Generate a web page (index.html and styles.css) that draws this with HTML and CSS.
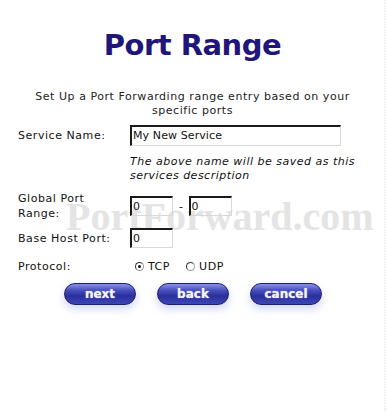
FILE: index.html
```html
<!DOCTYPE html>
<html>
<head>
<meta charset="utf-8">
<link rel="stylesheet" href="styles.css">
</head>
<body>
<div class="page">
  <h1 class="title">Port Range</h1>
  <p class="intro">Set Up a Port Forwarding range entry based on your<br>specific ports</p>
  <div class="form">
    <div class="row row-name">
      <div class="label">Service Name:</div>
      <div class="field"><span class="input input-wide">My New Service</span></div>
    </div>
    <div class="row row-note">
      <div class="label"></div>
      <div class="field note">The above name will be saved as this<br>services description</div>
    </div>
    <div class="row row-range">
      <div class="label label-two">Global Port<br>Range:</div>
      <div class="field range">
        <span class="input input-port">0</span>
        <span class="dash">-</span>
        <span class="input input-port">0</span>
      </div>
    </div>
    <div class="row row-host">
      <div class="label">Base Host Port:</div>
      <div class="field"><span class="input input-port">0</span></div>
    </div>
    <div class="row row-proto">
      <div class="label">Protocol:</div>
      <div class="field proto">
        <span class="radio checked"></span><span class="opt">TCP</span>
        <span class="radio"></span><span class="opt">UDP</span>
      </div>
    </div>
  </div>
  <div class="buttons">
    <span class="btn">next</span>
    <span class="btn">back</span>
    <span class="btn">cancel</span>
  </div>
  <div class="watermark" aria-hidden="true">PortForward.com</div>
</div>
</body>
</html>
```
FILE: styles.css
```css
html, body {
  margin: 0;
  padding: 0;
  background: #ffffff;
}
.page {
  position: relative;
  width: 386px;
  height: 411px;
  box-sizing: border-box;
  border-right: 1px dotted #e4e4e4;
  font-family: "DejaVu Sans", Verdana, sans-serif;
  font-size: 11px;
  letter-spacing: 0.55px;
  color: #111;
  overflow: hidden;
}
.title {
  margin: 0;
  padding-top: 28px;
  text-align: center;
  font-family: "DejaVu Sans", Verdana, sans-serif;
  font-weight: bold;
  font-size: 29px;
  line-height: 34px;
  color: #21157a;
  letter-spacing: -0.5px;
}
.intro {
  margin: 28px 0 0 0;
  text-align: center;
  line-height: 14px;
  font-size: 11px;
  color: #222;
}
.form {
  margin-top: 6px;
  padding-left: 18px;
  position: relative;
  z-index: 2;
}
.row {
  display: flex;
  align-items: center;
}
.label {
  width: 112px;
  flex: none;
  line-height: 15px;
}
.field {
  display: flex;
  align-items: center;
}
.input {
  display: inline-block;
  box-sizing: border-box;
  height: 21px;
  line-height: 18px;
  padding-left: 1px;
  border-top: 2px solid #1a1a1a;
  border-left: 2px solid #1a1a1a;
  border-right: 1px solid #d8d8d8;
  border-bottom: 1px solid #d8d8d8;
  background: transparent;
  color: #111;
  font-size: 11px;
  letter-spacing: 0;
}
.input-wide {
  width: 211px;
  letter-spacing: 0.1px;
}
.input-port {
  width: 43px;
  height: 20px;
}
.row-name {
  height: 22px;
}
.row-note {
  margin-top: 9px;
}
.note {
  display: block;
  font-style: italic;
  line-height: 14px;
  color: #111;
  letter-spacing: 0.5px;
}
.row-range {
  margin-top: 8px;
}
.dash {
  margin: 0 5px 0 6px;
}
.row-host {
  margin-top: 7px;
}
.row-proto {
  margin-top: 11px;
}
.proto {
  padding-left: 5px;
}
.radio {
  display: inline-block;
  width: 9px;
  height: 9px;
  box-sizing: border-box;
  border-radius: 50%;
  border: 1px solid #999;
  border-top-color: #333;
  border-left-color: #333;
  position: relative;
  margin-right: 4px;
}
.radio.checked::after {
  content: "";
  position: absolute;
  left: 2px;
  top: 2px;
  width: 3px;
  height: 3px;
  border-radius: 50%;
  background: #111;
}
.opt {
  margin-right: 16px;
}
.buttons {
  display: flex;
  gap: 21px;
  margin-top: 9px;
  padding-left: 64px;
  position: relative;
  z-index: 2;
}
.btn {
  display: inline-block;
  width: 72px;
  height: 22px;
  box-sizing: border-box;
  border-radius: 11px;
  text-align: center;
  line-height: 20px;
  font-weight: bold;
  font-size: 12px;
  letter-spacing: 0;
  color: #f4f4fb;
  border: 1px solid #1c1f6e;
  background: linear-gradient(to bottom, #8a92e8 0%, #4a52c0 30%, #2a2f9c 60%, #3d45b8 100%);
  box-shadow: 0 4px 8px rgba(120, 140, 230, 0.35);
  text-shadow: 0 0 1px #c8ccf4;
}
.watermark {
  position: absolute;
  left: 66px;
  top: 197px;
  font-family: "Liberation Serif", "Times New Roman", serif;
  font-weight: bold;
  font-size: 40px;
  line-height: 40px;
  letter-spacing: 0;
  color: #e4e4e4;
  z-index: 1;
  white-space: nowrap;
}
```
